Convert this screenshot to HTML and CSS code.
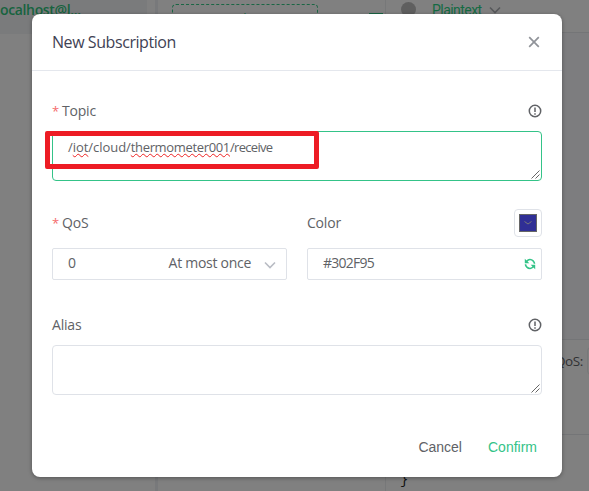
FILE: index.html
```html
<!DOCTYPE html>
<html lang="en">
<head>
<meta charset="utf-8">
<title>New Subscription</title>
<link rel="stylesheet" href="styles.css">
</head>
<body>
<div class="app">
  <aside class="connections"><div class="connection">ocalhost@l...</div></aside>
  <section class="subscriptions"><div class="new-sub">+ New Subscription</div><span class="collapse"></span></section>
  <main class="client">
    <header class="filter">
      <span class="dot"></span><span class="format">Plaintext</span>
      <svg class="chevron" viewBox="0 0 12 8"><path d="M1 1.5l5 5 5-5"/></svg>
    </header>
    <div class="messages"></div>
    <div class="publish"><span>QoS:</span><span class="qos-box"></span></div>
    <div class="editor">}</div>
  </main>
</div>

<div class="dialog">
  <header class="dialog-head">
    <h1>New Subscription</h1>
    <svg class="close" viewBox="0 0 12 12"><path d="M1.2 1.2l9.6 9.6M10.8 1.2L1.2 10.8"/></svg>
  </header>
  <form class="dialog-body">
    <div class="field topic">
      <div class="label"><span><i>*</i>Topic</span>
        <svg class="info" viewBox="0 0 14 14"><circle cx="7" cy="7" r="5.7"/><path d="M7 3.5v4.6M7 9.2v1.5"/></svg>
      </div>
      <div class="textarea focused"><span class="path-start">/<u>iot</u>/cloud/</span><u>thermometer001</u><span class="path-end">/receive</span>
        <svg class="grip" viewBox="0 0 9 9"><path d="M.5 8.5l8-8M4.5 8.5l4-4"/></svg>
      </div>
      <div class="highlight"></div>
    </div>
    <div class="row">
      <div class="field">
        <div class="label"><span><i>*</i>QoS</span></div>
        <div class="input"><span>0</span><span class="desc">At most once</span>
          <svg class="chevron" viewBox="0 0 12 8"><path d="M1 1.5l5 5 5-5"/></svg>
        </div>
      </div>
      <div class="field">
        <div class="label"><span>Color</span>
          <div class="picker"><div class="swatch"><svg viewBox="0 0 10 6"><path d="M1.5 1.5L5 4l3.5-2.5"/></svg></div></div>
        </div>
        <div class="input"><span class="hex">#302F95</span>
          <svg class="refresh" viewBox="0 0 12 12"><path d="M2.5 3.5Q5.8-.2 9.4 3.2Q10.5 4.4 10.5 5.8M9.5 8.5Q6.2 12.2 2.6 8.8Q1.5 7.6 1.5 6.2"/><path class="fill" d="M.8.8v4.5h4.5zM11.2 11.2V6.700H6.700z"/></svg>
        </div>
      </div>
    </div>
    <div class="field alias">
      <div class="label"><span>Alias</span>
        <svg class="info" viewBox="0 0 14 14"><circle cx="7" cy="7" r="5.7"/><path d="M7 3.5v4.6M7 9.2v1.5"/></svg>
      </div>
      <div class="textarea">
        <svg class="grip" viewBox="0 0 9 9"><path d="M.5 8.5l8-8M4.5 8.5l4-4"/></svg>
      </div>
    </div>
  </form>
  <footer class="actions"><span class="cancel">Cancel</span><span class="confirm">Confirm</span></footer>
</div>
</body>
</html>
```
FILE: styles.css
```css
* { box-sizing: border-box; }
body { margin: 0; height: 491px; overflow: hidden; font: 14px/20px "Open Sans", "Noto Sans", sans-serif; color: #606266; background: #808080; }
svg { fill: none; stroke: currentColor; display: block; flex: none; }
.app { display: flex; height: 491px; }
.connections { width: 155px; }
.connection { width: 147px; height: 34px; background: #7a7b7c; color: #17633f; font-weight: 600; line-height: 19px; white-space: nowrap; letter-spacing: -.35px; }
.subscriptions { width: 231px; border-left: 3px solid #78797b; border-right: 1px solid #777879; padding: 4px 2px 0 14px; overflow: hidden; display: flex; justify-content: space-between; }
.new-sub { width: 146px; height: 34px; border: 1px dashed #1a6644; border-radius: 4px; color: #1a6644; font-size: 13px; line-height: 26px; letter-spacing: -.4px; text-align: center; white-space: nowrap; }
.collapse { width: 14px; height: 12px; margin-top: 9px; border-top: 2px solid #1a6644; }
.client { flex: 1; display: flex; flex-direction: column; min-width: 0; }
.filter { height: 33px; border-bottom: 1px solid #747577; display: flex; align-items: flex-start; padding: 2px 0 0 15px; }
.dot { width: 15px; height: 15px; border-radius: 50%; background: #5f5f5f; }
.format { margin: -2px 7px 0 16px; color: #146b43; font: 14px/20px Roboto, sans-serif; letter-spacing: -.55px; }
.chevron { width: 12px; height: 8px; stroke-width: 1.6; color: #b9bcc4; }
.filter .chevron { color: #57585b; margin-top: 4px; }
.messages { height: 306px; background: #7d7d7f; }
.publish { height: 96px; border-top: 1px solid #747577; border-bottom: 1px solid #747577; padding: 7px 0 0 169px; display: flex; color: #303133; line-height: 28px; font-size: 13.5px; letter-spacing: -.4px; }
.qos-box { width: 20px; height: 28px; margin-left: 4px; border: 1px solid #777879; border-radius: 4px; flex: none; }
.editor { padding: 35px 0 0 14px; font: 14px/20px "Liberation Mono", monospace; color: #111; }

.dialog { position: absolute; left: 32px; top: 14px; width: 530px; height: 463px; background: #fff; border-radius: 8px; box-shadow: 0 1px 4px rgba(0,0,0,.35); }
.dialog-head { height: 57px; border-bottom: 1px solid #e4e7ed; padding: 0 22px 0 20px; display: flex; align-items: center; justify-content: space-between; }
h1 { margin: 0; font-size: 16px; font-weight: 400; line-height: 24px; color: #3f4254; letter-spacing: -.43px; }
.close { width: 12px; height: 12px; color: #909399; stroke-width: 1.7; }
.dialog-body { padding: 28px 20px 0; }
.field { min-width: 0; }
.label { height: 24px; display: flex; align-items: center; justify-content: space-between; letter-spacing: -.2px; }
.label i { color: #f56c6c; font-style: normal; margin-right: 3px; font-size: 13px; }
.info { width: 14px; height: 14px; stroke-width: 1.5; color: #606266; }
.textarea { height: 50px; margin-top: 8px; border: 1px solid #dfe2e8; border-radius: 4px; padding: 5px 15px; position: relative; font-size: 13px; line-height: 21px; letter-spacing: -.34px; }
.focused { border-color: #34c388; }
.path-start { letter-spacing: -.05px; }
.path-end { letter-spacing: -.7px; }
.textarea u { text-decoration: underline wavy #e22 1px; text-decoration-skip-ink: none; text-underline-offset: 1px; }
.grip { position: absolute; right: 1px; bottom: 1px; width: 9px; height: 9px; stroke-width: .9; color: #555; }
.topic { position: relative; }
.highlight { position: absolute; left: -7px; top: 32px; width: 274px; height: 38px; border: 5px solid #ed1c24; border-radius: 2px; }
.row { display: grid; grid-template-columns: 235px 235px; column-gap: 20px; margin-top: 28px; }
.row .label { height: 28px; }
.input { height: 32px; margin-top: 11px; border: 1px solid #dfe2e8; border-radius: 2px; padding: 0 10px 2px 15px; display: flex; align-items: center; }
.input .chevron { margin-top: 3px; }
.desc { margin-left: auto; margin-right: 13px; letter-spacing: -.28px; }
.hex { letter-spacing: -.75px; }
.picker { width: 28px; height: 28px; border: 1px solid #dfe2e8; border-radius: 4px; padding: 4px; }
.swatch { width: 18px; height: 18px; background: #302f95; border: 1px solid #666; padding: 5px 3px; color: #777; }
.swatch svg { width: 10px; height: 6px; }
.refresh { width: 12px; height: 12px; margin: 2px -5px 0 auto; color: #34c388; stroke-width: 1.6; }
.refresh .fill { fill: currentColor; stroke: none; }
.row + .alias { margin-top: 33px; }
.actions { display: flex; justify-content: flex-end; gap: 26px; padding: 42px 25px 0; font: 14px/20px "Liberation Sans", sans-serif; }
.confirm { color: #34c388; }
```
